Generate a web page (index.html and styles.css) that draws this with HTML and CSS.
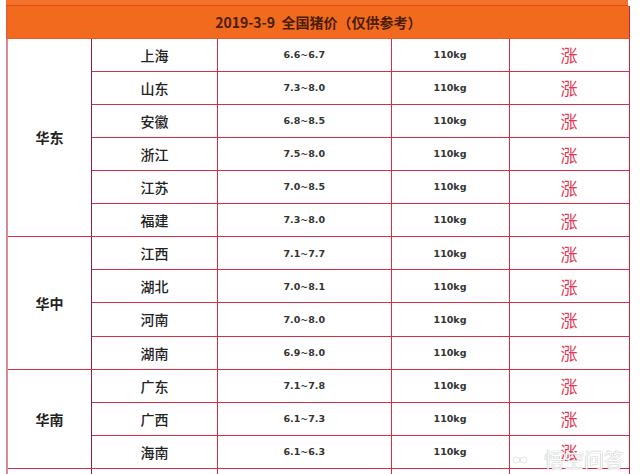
FILE: index.html
```html
<!DOCTYPE html>
<html lang="zh-CN">
<head>
<meta charset="utf-8">
<title>2019-3-9 全国猪价</title>
<link rel="stylesheet" href="styles.css">
</head>
<body>
<div class="page">
  <div class="topbar"></div>
  <table class="prices">
    <colgroup>
      <col class="c-region"><col class="c-prov"><col class="c-price"><col class="c-weight"><col class="c-trend">
    </colgroup>
    <thead>
      <tr><th colspan="5" class="title">2019-3-9&nbsp;&nbsp;全国猪价（仅供参考）</th></tr>
    </thead>
    <tbody>
      <tr><td class="region" rowspan="6">华东</td><td class="prov">上海</td><td class="num">6.6~6.7</td><td class="num">110kg</td><td class="trend">涨</td></tr>
      <tr><td class="prov">山东</td><td class="num">7.3~8.0</td><td class="num">110kg</td><td class="trend">涨</td></tr>
      <tr><td class="prov">安徽</td><td class="num">6.8~8.5</td><td class="num">110kg</td><td class="trend">涨</td></tr>
      <tr><td class="prov">浙江</td><td class="num">7.5~8.0</td><td class="num">110kg</td><td class="trend">涨</td></tr>
      <tr><td class="prov">江苏</td><td class="num">7.0~8.5</td><td class="num">110kg</td><td class="trend">涨</td></tr>
      <tr><td class="prov">福建</td><td class="num">7.3~8.0</td><td class="num">110kg</td><td class="trend">涨</td></tr>
      <tr><td class="region" rowspan="4">华中</td><td class="prov">江西</td><td class="num">7.1~7.7</td><td class="num">110kg</td><td class="trend">涨</td></tr>
      <tr><td class="prov">湖北</td><td class="num">7.0~8.1</td><td class="num">110kg</td><td class="trend">涨</td></tr>
      <tr><td class="prov">河南</td><td class="num">7.0~8.0</td><td class="num">110kg</td><td class="trend">涨</td></tr>
      <tr><td class="prov">湖南</td><td class="num">6.9~8.0</td><td class="num">110kg</td><td class="trend">涨</td></tr>
      <tr><td class="region" rowspan="3">华南</td><td class="prov">广东</td><td class="num">7.1~7.8</td><td class="num">110kg</td><td class="trend">涨</td></tr>
      <tr><td class="prov">广西</td><td class="num">6.1~7.3</td><td class="num">110kg</td><td class="trend">涨</td></tr>
      <tr><td class="prov">海南</td><td class="num">6.1~6.3</td><td class="num">110kg</td><td class="trend">涨</td></tr>
      <tr><td class="region"></td><td class="prov"></td><td class="num"></td><td class="num"></td><td class="trend"></td></tr>
    </tbody>
  </table>
  <div class="watermark">
    <svg class="wm-icon" width="16" height="12" viewBox="0 0 16 12">
      <ellipse cx="4.5" cy="6" rx="3.5" ry="3" fill="none" stroke="#fff" stroke-width="2.2"/>
      <ellipse cx="11.5" cy="6" rx="3.5" ry="3" fill="none" stroke="#fff" stroke-width="2.2"/>
      <ellipse cx="4.5" cy="6" rx="3.5" ry="3" fill="none" stroke="rgba(0,0,0,0.18)" stroke-width="0.6"/>
      <ellipse cx="11.5" cy="6" rx="3.5" ry="3" fill="none" stroke="rgba(0,0,0,0.18)" stroke-width="0.6"/>
    </svg>
    <span class="wm-text">悟空问答</span>
  </div>
</div>
</body>
</html>
```
FILE: styles.css
```css
html, body {
  margin: 0;
  padding: 0;
  background: #ffffff;
}
body {
  font-family: "Noto Sans CJK SC", "Noto Sans", sans-serif;
  color: #222;
}
.page {
  position: relative;
  width: 640px;
  height: 474px;
  overflow: hidden;
}
.topbar {
  margin-left: 6px;
  width: 622px;
  height: 5px;
  background: #f3722a;
  border-bottom: 1px solid #e4481a;
}
.prices {
  margin-left: 6px;
  width: 622px;
  border-collapse: collapse;
  table-layout: fixed;
}
.c-region { width: 84.5px; }
.c-prov { width: 126px; }
.c-price { width: 173.5px; }
.c-weight { width: 118px; }
.c-trend { width: 120px; }
.title {
  height: 31.7px;
  padding: 0;
  background: #f26a1e;
  color: #4a1d08;
  font-weight: 700;
  font-size: 14px;
  text-align: center;
  border-left: 2px solid #e8603a;
  border-right: 1px solid #c22a3a;
  border-bottom: 1px solid #e05a30;
}
.prices tbody tr {
  height: 33.1px;
}
.prices td {
  padding: 0;
  text-align: center;
  border: 1px solid #d42e45;
  line-height: 1;
}
.prices td.region {
  border-left: 2px solid #d88a98;
  border-right: 1px solid #8c1f3f;
  font-weight: 700;
  font-size: 14px;
  color: #222;
}
.prices td.prov {
  font-size: 14px;
  font-weight: 500;
  color: #222;
  border-left: 1px solid #8c1f3f;
}
.prices td.num {
  font-family: "DejaVu Sans", "Liberation Sans", sans-serif;
  font-weight: 700;
  font-size: 9.5px;
  color: #333;
}
.prices td.trend {
  font-size: 17px;
  font-weight: 400;
  color: #e23a55;
  border-right: 1px solid #c22a3a;
}
.watermark {
  position: absolute;
  left: 512px;
  top: 445px;
  display: flex;
  align-items: center;
  gap: 16px;
  opacity: 0.9;
}
.wm-text {
  font-size: 20px;
  font-weight: 400;
  color: #ffffff;
  letter-spacing: 0px;
  text-shadow: 0 0 1px rgba(0, 0, 0, 0.35), 0 0 1px rgba(0, 0, 0, 0.2);
}
```
